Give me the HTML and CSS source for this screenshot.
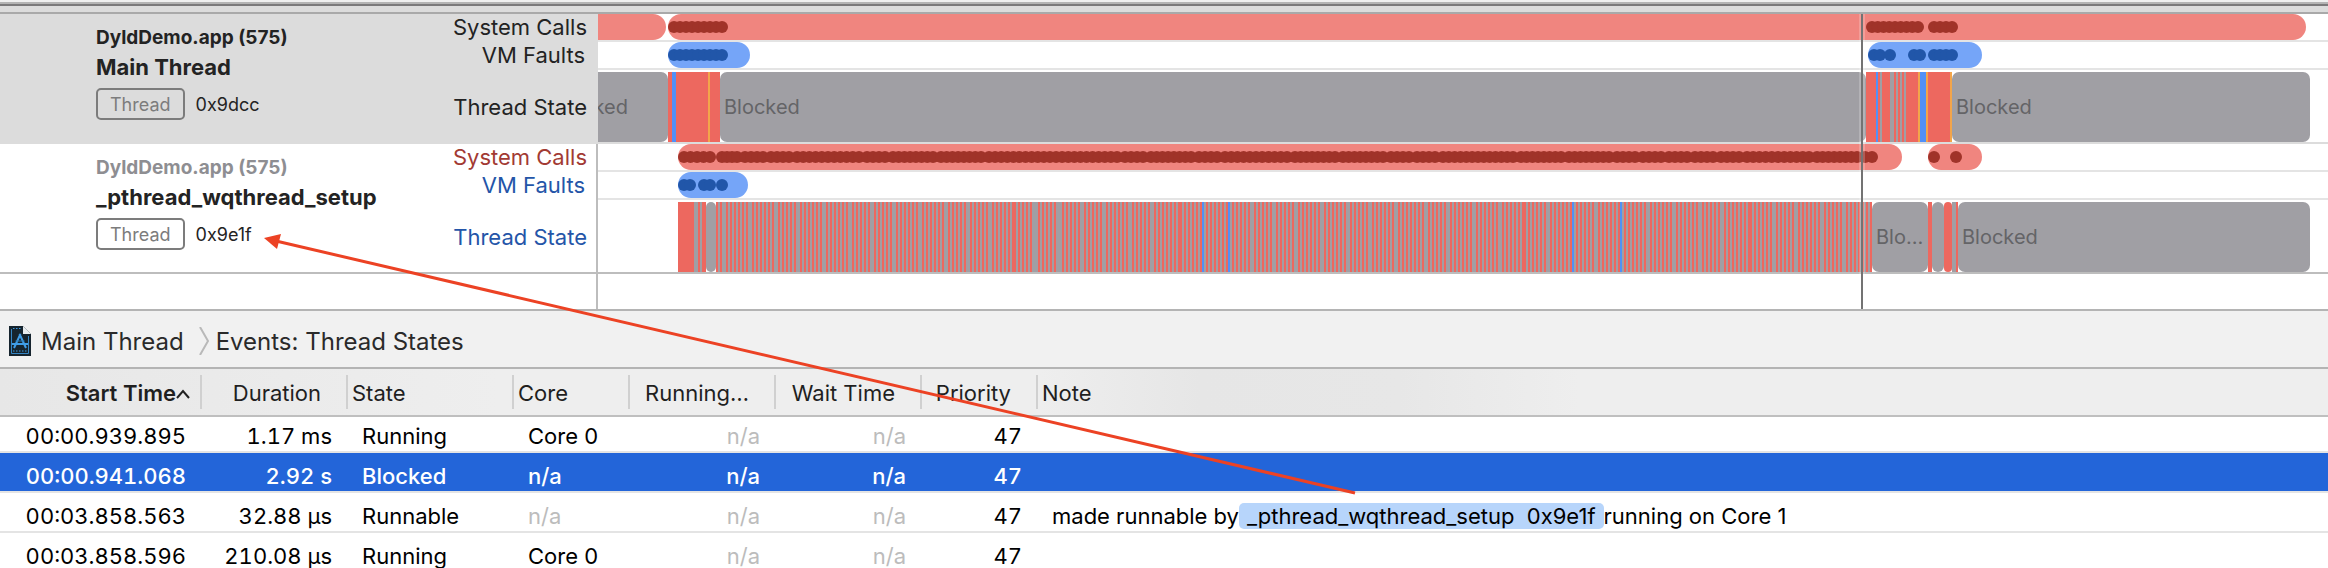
FILE: index.html
```html
<!DOCTYPE html>
<html lang="en">
<head>
<meta charset="utf-8">
<title>Thread States</title>
<link rel="stylesheet" href="styles.css">
</head>
<body>
<div class="window">
  <div class="splitter"></div>

  <main class="tracks">
    <section class="track selected">
      <div class="thread">
        <div class="info">
          <div class="process">DyldDemo.app (575)</div>
          <div class="name">Main Thread</div>
          <div class="meta"><span class="badge">Thread</span><span>0x9dcc</span></div>
        </div>
        <div class="labels">
          <div class="label">System Calls</div>
          <div class="label inset">VM Faults</div>
          <div class="label state">Thread State</div>
        </div>
      </div>
      <div class="lanes">
        <svg class="lane" aria-hidden="true"><g transform="translate(-598)">
          <rect class="calls" x="560" width="106" height="26" rx="13"/>
          <rect class="calls" x="668" width="1638" height="26" rx="13"/>
          <g class="call-dots" data-runs="674-722,1872-1918,1934-1952"></g>
        </g></svg>
        <svg class="lane" aria-hidden="true"><g transform="translate(-598)">
          <rect class="faults" x="668" width="82" height="26" rx="13"/>
          <rect class="faults" x="1868" width="114" height="26" rx="13"/>
          <g class="fault-dots" data-runs="674-722,1874-1880,1890-1890,1914-1920,1934-1952"></g>
        </g></svg>
        <svg class="lane tall"><g transform="translate(-598)">
          <rect class="blocked" x="540" y="2" width="128" height="70" rx="7"/>
          <rect class="running" x="668" y="2" width="52" height="70"/>
          <rect class="kernel" x="672" y="2" width="4" height="70"/>
          <rect class="runnable" x="708" y="2" width="2" height="70"/>
          <rect class="gap" x="720" y="2" width="10" height="70"/>
          <rect class="blocked" x="720" y="2" width="1146" height="70" rx="7"/>
          <rect class="running" x="1866" y="2" width="86" height="70"/>
          <rect class="kernel" x="1876" y="2" width="2" height="70"/>
          <path class="blocked" d="M1880 2h2v70h-2zM1890 2h4v70h-4zM1896 2h2v70h-2zM1900 2h2v70h-2zM1904 2h2v70h-2z"/>
          <rect class="kernel" x="1920" y="2" width="6" height="70"/>
          <path class="runnable" d="M1918 2h2v70h-2zM1926 2h2v70h-2zM1950 2h2v70h-2z"/>
          <rect class="blocked" x="1952" y="2" width="358" height="70" rx="7"/>
          <text x="628" y="44" text-anchor="end">Blocked</text>
          <text x="724" y="44">Blocked</text>
          <text x="1956" y="44">Blocked</text>
        </g></svg>
      </div>
    </section>

    <section class="track">
      <div class="thread">
        <div class="info">
          <div class="process">DyldDemo.app (575)</div>
          <div class="name">_pthread_wqthread_setup</div>
          <div class="meta"><span class="badge">Thread</span><span>0x9e1f</span></div>
        </div>
        <div class="labels">
          <div class="label red">System Calls</div>
          <div class="label inset">VM Faults</div>
          <div class="label state">Thread State</div>
        </div>
      </div>
      <div class="lanes">
        <svg class="lane" aria-hidden="true"><g transform="translate(-598)">
          <rect class="calls" x="678" width="1224" height="26" rx="13"/>
          <rect class="calls" x="1928" width="54" height="26" rx="13"/>
          <g class="call-dots" data-runs="684-710,722-737,745-763,771-789,797-859,867-885,893-933,941-981,989-1117,1125-1143,1151-1191,1199-1217,1225-1287,1295-1335,1343-1383,1391-1409,1417-1435,1443-1513,1521-1561,1569-1609,1617-1635,1643-1661,1669-1687,1695-1713,1721-1739,1747-1809,1817-1857,1865-1872,1934-1934,1956-1956"></g>
        </g></svg>
        <svg class="lane" aria-hidden="true"><g transform="translate(-598)">
          <rect class="faults" x="678" width="70" height="26" rx="13"/>
          <g class="fault-dots" data-runs="684-690,704-710,722-722"></g>
        </g></svg>
        <svg class="lane tall"><g transform="translate(-598)">
          <rect class="running" x="678" y="2" width="28" height="70"/>
          <path class="blocked" d="M694 2h4v70h-4zM700 2h2v70h-2z"/>
          <rect class="gap" x="706" y="2" width="10" height="70"/>
          <rect class="blocked" x="706" y="2" width="10" height="70" rx="5"/>
          <rect class="blocked" x="716" y="2" width="1156" height="70"/>
          <path class="running" id="stripes"/>
          <path class="kernel" d="M1202 2h2v70h-2zM1228 2h2v70h-2zM1572 2h2v70h-2zM1620 2h2v70h-2z"/>
          <rect class="gap" x="1872" y="2" width="56" height="70"/>
          <rect class="blocked" x="1872" y="2" width="56" height="70" rx="7"/>
          <rect class="running" x="1928" y="2" width="4" height="70"/>
          <rect class="blocked" x="1932" y="2" width="12" height="70" rx="6"/>
          <rect class="running" x="1944" y="2" width="8" height="70" rx="4"/>
          <rect class="blocked" x="1952" y="2" width="4" height="70"/>
          <rect class="running" x="1956" y="2" width="2" height="70"/>
          <rect class="blocked" x="1958" y="2" width="352" height="70" rx="7"/>
          <text x="1876" y="44">Blo…</text>
          <text x="1962" y="44">Blocked</text>
        </g></svg>
      </div>
    </section>
    <div class="filler"></div>
    <div class="playhead"></div>
  </main>

  <nav class="crumbs" aria-label="Detail path">
    <svg class="doc" viewBox="0 0 22 30" aria-hidden="true">
      <path d="M0 0H14L22 8V30H0Z" fill="#16242e"/>
      <path d="M14 0L22 8H14Z" fill="#e9edf0"/>
      <path d="M2.500 3V27.500H19.500V10" fill="none" stroke="#3585c4"/>
      <path d="M4 2.500H13M4 25H19" fill="none" stroke="#3f9ce6" stroke-dasharray="1.500 1.500"/>
      <path d="M11.500 8L5 22M10.500 8L17 22M3 18H19" fill="none" stroke="#3f9ce6" stroke-width="2"/>
      <path d="M6.500 15H15.500" fill="none" stroke="#2b76ad"/>
    </svg>
    <span>Main Thread</span>
    <svg class="chevron" viewBox="0 0 10 28" aria-hidden="true"><path d="M1 0L9 14L1 28" fill="none" stroke="#b9b9b9" stroke-width="2"/></svg>
    <span>Events: Thread States</span>
  </nav>

  <table class="events">
    <colgroup><col class="c-start"><col class="c-time"><col class="c-state"><col class="c-core"><col class="c-time"><col class="c-time"><col class="c-prio"><col></colgroup>
    <thead>
      <tr>
        <th class="num sorted">Start Time<svg class="caret" viewBox="0 0 14 10" aria-hidden="true"><path d="M1 9L7 2L13 9" fill="none" stroke="#222" stroke-width="2"/></svg></th>
        <th class="num">Duration</th><th>State</th><th>Core</th>
        <th class="num">Running…</th><th class="num">Wait Time</th><th class="num">Priority</th><th>Note</th>
      </tr>
    </thead>
    <tbody>
      <tr class="first"><td class="num">00:00.939.895</td><td class="num">1.17 ms</td><td>Running</td><td>Core 0</td><td class="num na">n/a</td><td class="num na">n/a</td><td class="num">47</td><td></td></tr>
      <tr class="current"><td class="num">00:00.941.068</td><td class="num">2.92 s</td><td>Blocked</td><td>n/a</td><td class="num">n/a</td><td class="num">n/a</td><td class="num">47</td><td></td></tr>
      <tr><td class="num">00:03.858.563</td><td class="num">32.88 µs</td><td>Runnable</td><td class="na">n/a</td><td class="num na">n/a</td><td class="num na">n/a</td><td class="num">47</td><td>made runnable by<mark>_pthread_wqthread_setup  0x9e1f</mark>running on Core 1</td></tr>
      <tr><td class="num">00:03.858.596</td><td class="num">210.08 µs</td><td>Running</td><td>Core 0</td><td class="num na">n/a</td><td class="num na">n/a</td><td class="num">47</td><td></td></tr>
    </tbody>
  </table>

  <svg class="arrow" aria-hidden="true">
    <path d="M1355 493L276 241" fill="none" stroke="#ec4224" stroke-width="3"/>
    <path d="M264 238L281 234L277 249Z" fill="#ec4224"/>
  </svg>
</div>
<script src="timeline.js"></script>
</body>
</html>
```
FILE: styles.css
```css
* { box-sizing: border-box; }
body {
  margin: 0;
  background: #fff;
  color: #000;
  font-family: Inter, "Liberation Sans", sans-serif;
  font-size: 22px;
}
.window { position: relative; height: 100vh; overflow: hidden; }
.splitter {
  height: 14px;
  background: linear-gradient(#f0f0f0 0 2px, #b4b4b4 2px 4px, #7b7a7b 4px 6px, #dcdcdc 6px 12px, #a9a9a9 12px);
}

.tracks { position: relative; border-bottom: 2px solid #b4b4b4; }
.track { display: grid; grid-template-columns: 598px 1fr; border-bottom: 2px solid #bdbdbd; }
.track.selected { border-bottom: 0; }
.thread {
  display: flex;
  justify-content: space-between;
  padding: 0 9px 0 96px;
  border-right: 2px solid #bdbdbd;
  color: #232323;
}
.selected .thread { background: #dcdcdc; border-color: #dcdcdc; }
.info { padding-top: 12px; }
.process { font-size: 19px; font-weight: 700; line-height: 24px; color: #8e8e92; }
.selected .process { color: #232323; }
.name { margin-top: 5px; font-weight: 700; line-height: 24px; }
.meta { display: flex; align-items: center; gap: 11px; margin-top: 9px; font-size: 18px; }
.badge {
  height: 32px;
  padding: 0 12px;
  border: 2px solid #7c7c7c;
  border-radius: 5px;
  color: #7c7c7c;
  line-height: 30px;
}
.labels { text-align: right; color: #2455a8; }
.selected .labels { color: #232323; }
.label { height: 28px; line-height: 26px; }
.label.red { color: #a23a33; }
.label.inset { padding-right: 2px; }
.label.state { height: 72px; line-height: 74px; }

.lanes { min-width: 0; }
.lane { display: block; width: 100%; height: 28px; border-bottom: 2px solid #e4e4e4; }
.lane.tall { height: 72px; border-bottom: 0; }
.selected .lane.tall { height: 74px; border-bottom: 2px solid #dcdcdc; }
.lane text { fill: #646467; font-size: 20px; }
.calls { fill: #f0857f; }
.faults { fill: #75a5f8; }
.call-dots { fill: #a03329; }
.fault-dots { fill: #2156a9; }
.blocked { fill: #a09fa4; }
.running { fill: #ed685f; }
.kernel { fill: #5190f7; }
.runnable { fill: #f3a54a; }
.gap { fill: #fff; }
.filler { width: 598px; height: 35px; border-right: 2px solid #bdbdbd; }
.playhead {
  position: absolute;
  top: 0;
  bottom: 0;
  left: 1859px;
  width: 6px;
  border: solid rgba(255, 255, 255, 0.2);
  border-width: 0 2px;
  background: #737373 padding-box;
}

.crumbs {
  display: flex;
  align-items: center;
  height: 58px;
  padding: 4px 9px 0;
  border-bottom: 2px solid #b4b4b4;
  background: #f1f1f1;
  color: #2a2a2a;
  font-size: 24px;
}
.doc { width: 22px; height: 30px; margin-right: 10px; }
.chevron { width: 10px; height: 28px; margin: 0 7px 0 15px; }

.events { width: 100%; border-collapse: separate; border-spacing: 0; table-layout: fixed; }
.c-start { width: 202px; }
.c-time { width: 146px; }
.c-state { width: 166px; }
.c-core { width: 116px; }
.c-prio { width: 116px; }
thead tr { background: linear-gradient(90deg, #e7e7e7, #eee 500px, #eee 1040px, #e6e6e6 1200px, #e7e7e7 1400px, #eee 1580px); }
th {
  height: 48px;
  padding: 1px 0 0 4px;
  border-bottom: 2px solid #bfbfbf;
  background: linear-gradient(#d0d0d0, #d0d0d0) no-repeat right 6px / 2px 34px;
  color: #1f1f1f;
  font-weight: 400;
  text-align: left;
  white-space: nowrap;
}
th:last-child { background: none; }
th.num { padding-right: 27px; text-align: right; }
th.sorted { padding-right: 12px; font-weight: 600; }
.caret { width: 14px; height: 10px; vertical-align: 2px; }
td {
  height: 40px;
  padding: 0 0 3px 14px;
  border-bottom: 2px solid #e4e4e4;
  line-height: 24px;
  vertical-align: bottom;
  white-space: pre;
}
.first td { height: 36px; }
td.num { padding-right: 16px; padding-left: 0; text-align: right; font-variant-numeric: tabular-nums; }
.na { color: #bcbcbc; }
.current td { background: #2365d9; color: #fff; font-weight: 500; }
mark { padding: 0 8px; border-radius: 5px; background: #b7d5fb; color: inherit; }

.arrow { position: absolute; inset: 0; width: 100%; height: 100%; pointer-events: none; }
```
FILE: timeline.js
```js
const NS = "http://www.w3.org/2000/svg";

// Each run "a-b" becomes a chain of overlapping dots about 6px apart.
document.querySelectorAll("[data-runs]").forEach((group) => {
  group.dataset.runs.split(",").forEach((run) => {
    const [from, to] = run.split("-").map(Number);
    const steps = Math.round((to - from) / 6);
    for (let i = 0; i <= steps; i++) {
      const dot = document.createElementNS(NS, "circle");
      dot.setAttribute("cx", steps ? from + ((to - from) * i) / steps : from);
      dot.setAttribute("cy", 13);
      dot.setAttribute("r", 6);
      group.append(dot);
    }
  });
});

// Bursts of 2px running slices, 4px apart, each burst ending before the next one.
const bursts = [716, 726, 752, 778, 800, 826, 852, 874, 896, 922, 948, 970, 992, 1018, 1038,
  1062, 1084, 1106, 1132, 1154, 1184, 1206, 1232, 1254, 1276, 1298, 1302, 1324, 1350, 1372,
  1398, 1428, 1450, 1476, 1502, 1528, 1550, 1576, 1598, 1624, 1650, 1676, 1702, 1724, 1754,
  1776, 1798, 1824, 1846, 1876];
let d = "M1014 2h2v70h-2zM1180 2h2v70h-2zM1524 2h2v70h-2zM1750 2h2v70h-2z";
bursts.slice(0, -1).forEach((start, i) => {
  for (let x = start; x <= Math.max(start, bursts[i + 1] - 6); x += 4) d += `M${x} 2h2v70h-2z`;
});
document.getElementById("stripes").setAttribute("d", d);
```
